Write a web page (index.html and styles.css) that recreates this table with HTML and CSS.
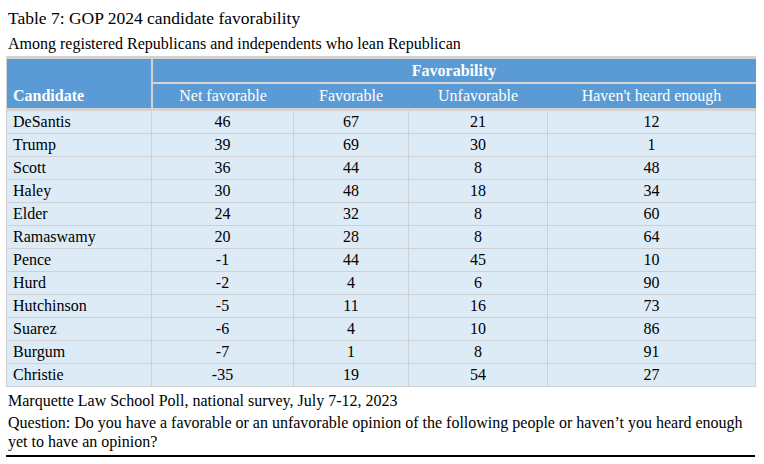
FILE: index.html
```html
<!DOCTYPE html>
<html lang="en">
<head>
<meta charset="utf-8">
<title>Table 7: GOP 2024 candidate favorability</title>
<link rel="stylesheet" href="styles.css">
</head>
<body>
<div class="page">
  <p class="title">Table 7: GOP 2024 candidate favorability</p>
  <p class="subtitle">Among registered Republicans and independents who lean Republican</p>
  <table class="fav">
    <colgroup>
      <col class="c-cand">
      <col class="c-net">
      <col class="c-favr">
      <col class="c-unf">
      <col class="c-hav">
    </colgroup>
    <thead>
      <tr class="h1">
        <th class="cand" rowspan="2">Candidate</th>
        <th class="group" colspan="4">Favorability</th>
      </tr>
      <tr class="h2">
        <th>Net favorable</th>
        <th>Favorable</th>
        <th>Unfavorable</th>
        <th>Haven't heard enough</th>
      </tr>
    </thead>
    <tbody>
      <tr><td>DeSantis</td><td>46</td><td>67</td><td>21</td><td>12</td></tr>
      <tr><td>Trump</td><td>39</td><td>69</td><td>30</td><td>1</td></tr>
      <tr><td>Scott</td><td>36</td><td>44</td><td>8</td><td>48</td></tr>
      <tr><td>Haley</td><td>30</td><td>48</td><td>18</td><td>34</td></tr>
      <tr><td>Elder</td><td>24</td><td>32</td><td>8</td><td>60</td></tr>
      <tr><td>Ramaswamy</td><td>20</td><td>28</td><td>8</td><td>64</td></tr>
      <tr><td>Pence</td><td>-1</td><td>44</td><td>45</td><td>10</td></tr>
      <tr><td>Hurd</td><td>-2</td><td>4</td><td>6</td><td>90</td></tr>
      <tr><td>Hutchinson</td><td>-5</td><td>11</td><td>16</td><td>73</td></tr>
      <tr><td>Suarez</td><td>-6</td><td>4</td><td>10</td><td>86</td></tr>
      <tr><td>Burgum</td><td>-7</td><td>1</td><td>8</td><td>91</td></tr>
      <tr><td>Christie</td><td>-35</td><td>19</td><td>54</td><td>27</td></tr>
    </tbody>
  </table>
  <div class="notes">
    <p class="source">Marquette Law School Poll, national survey, July 7-12, 2023</p>
    <p class="question">Question: Do you have a favorable or an unfavorable opinion of the following people or haven’t you heard enough yet to have an opinion?</p>
  </div>
</div>
</body>
</html>
```

FILE: styles.css
```css
html, body {
  margin: 0;
  padding: 0;
  background: #ffffff;
}

body {
  font-family: "Liberation Serif", "Times New Roman", serif;
  color: #000000;
}

.page {
  width: 749px;
  padding: 0 9px 0 6px;
}

.title {
  margin: 8px 0 0 2px;
  font-size: 17.5px;
  line-height: 20px;
}

.subtitle {
  margin: 6px 0 0 2px;
  font-size: 16px;
  line-height: 20px;
}

.fav {
  margin-top: 2px;
  width: 749px;
  border-collapse: collapse;
  table-layout: fixed;
  font-size: 16px;
  border-top: 3px solid #d3d3d3;
}

.c-cand { width: 145px; }
.c-net { width: 142px; }
.c-favr { width: 115px; }
.c-unf { width: 139px; }
.c-hav { width: 208px; }

.fav th {
  background: #5b9bd5;
  color: #ffffff;
  padding: 0;
  border-left: none;
  border-right: none;
}

.fav .cand {
  text-align: left;
  vertical-align: bottom;
  padding: 0 0 3px 6px;
  font-weight: bold;
  border-right: 2px solid #d3d3d3;
  border-left: 1px solid #d3d3d3;
  border-bottom: 3px solid #d3d3d3;
}

.fav .group {
  font-weight: bold;
  text-align: center;
  height: 23px;
  border-bottom: 2px solid #d3d3d3;
}

.fav .h2 th {
  font-weight: normal;
  text-align: center;
  height: 24px;
  border-bottom: 3px solid #d3d3d3;
}

.fav td {
  background: #ddebf7;
  height: 22px;
  padding: 0;
  text-align: center;
  border: 1px solid #d0d0d0;
}

.fav td:first-child {
  text-align: left;
  padding-left: 6px;
}

.notes {
  border-bottom: 2px solid #000000;
  padding-bottom: 4px;
}

.source {
  margin: 4px 0 0 2px;
  font-size: 16px;
  line-height: 20px;
}

.question {
  margin: 2px 0 0 2px;
  font-size: 16px;
  line-height: 19px;
}
```
